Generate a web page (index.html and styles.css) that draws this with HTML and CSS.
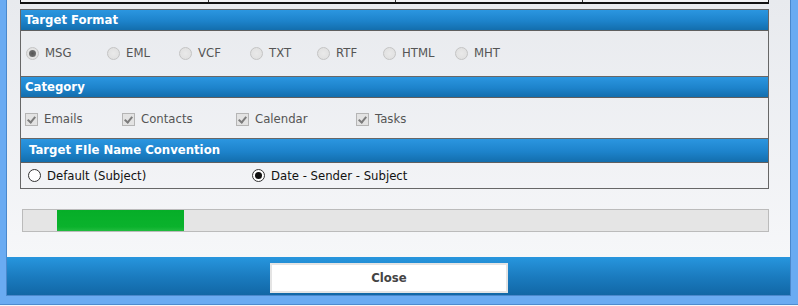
FILE: index.html
```html
<!DOCTYPE html>
<html lang="en">
<head>
    <meta charset="UTF-8">
    <title>Export</title>
    <link rel="stylesheet" href="styles.css">
</head>
<body>
    <div class="frame">
        <div class="dialog">
            <div class="content">
                <div class="top-table">
                    <div></div><div></div><div></div><div></div>
                </div>

                <div class="options">
                    <div class="opt-head">Target Format</div>
                    <div class="opt-body formats">
                        <label><input type="radio" name="fmt" checked disabled> MSG</label>
                        <label><input type="radio" name="fmt" disabled> EML</label>
                        <label><input type="radio" name="fmt" disabled> VCF</label>
                        <label><input type="radio" name="fmt" disabled> TXT</label>
                        <label><input type="radio" name="fmt" disabled> RTF</label>
                        <label><input type="radio" name="fmt" disabled> HTML</label>
                        <label><input type="radio" name="fmt" disabled> MHT</label>
                    </div>

                    <div class="opt-head">Category</div>
                    <div class="opt-body category">
                        <label><input type="checkbox" checked disabled> Emails</label>
                        <label><input type="checkbox" checked disabled> Contacts</label>
                        <label><input type="checkbox" checked disabled> Calendar</label>
                        <label><input type="checkbox" checked disabled> Tasks</label>
                    </div>

                    <div class="opt-head naming-head">Target FIle Name Convention</div>
                    <div class="opt-body naming">
                        <label><input type="radio" name="naming"> Default (Subject)</label>
                        <label><input type="radio" name="naming" checked> Date - Sender - Subject</label>
                    </div>
                </div>

                <div class="progress">
                    <div class="progress-fill"></div>
                </div>
            </div>

            <div class="footer">
                <button class="close-btn">Close</button>
            </div>
        </div>
    </div>
</body>
</html>
```

FILE: styles.css
```css
* {
    margin: 0;
    padding: 0;
    box-sizing: border-box;
}

body {
    width: 798px;
    height: 306px;
    background: #f7f8fa;
    font-family: "DejaVu Sans", Verdana, sans-serif;
    font-size: 11.7px;
    overflow: hidden;
}

.frame {
    height: 305px;
    background: #6aabf2;
    border-bottom: 1px solid #4d8bd0;
    padding: 0 7px 8px 6px;
}

.dialog {
    height: 100%;
    display: flex;
    flex-direction: column;
    border: 1px solid #4a88cc;
    border-top: none;
}

.content {
    flex: 1;
    background: linear-gradient(#e8eaee, #f6f7f9);
    padding-left: 13px;
}

/* the bottom of the list table above, cut off by the view */
.top-table {
    width: 749px;
    height: 4px;
    display: grid;
    grid-template-columns: 187px 187px 187px auto;
    background: #f1f2f4;
    border: 1px solid #111;
    border-top: none;
    border-bottom-width: 2px;
}

.top-table div + div {
    border-left: 1px solid #333;
}

.options {
    width: 749px;
    margin-top: 5px;
    border: 1px solid #676767;
}

.opt-head {
    height: 21px;
    line-height: 20px;
    padding-left: 4px;
    color: #fff;
    font-weight: bold;
    background: linear-gradient(#2b96e0, #1d83cb 55%, #136ead);
    border-bottom: 1px solid #5f5f5f;
}

.naming-head {
    height: 24px;
    line-height: 22px;
    padding-left: 8px;
}

.opt-body {
    display: grid;
    align-items: center;
    color: #555;
    border-bottom: 1px solid #676767;
}

.opt-body:last-child {
    border-bottom: none;
}

.opt-body label {
    display: flex;
    align-items: center;
    gap: 6px;
    white-space: nowrap;
}

.formats {
    height: 46px;
    padding: 0 0 1px 5px;
    grid-template-columns: 81px 72px 71px 67px 66px 72px auto;
}

.category {
    height: 41px;
    padding: 2px 0 0 4px;
    grid-template-columns: 97px 114px 120px auto;
}

.naming {
    height: 25px;
    padding: 0 0 0 7px;
    color: #111;
    grid-template-columns: 224px auto;
}

/* radios and checkboxes */
input[type="radio"],
input[type="checkbox"] {
    appearance: none;
    width: 13px;
    height: 13px;
    flex: none;
    position: relative;
}

input[type="radio"] {
    border-radius: 50%;
    border: 1px solid #333;
    background: #fff;
}

input[type="radio"]:checked::after {
    content: "";
    position: absolute;
    left: 2px;
    top: 2px;
    width: 7px;
    height: 7px;
    border-radius: 50%;
    background: #111;
}

input[type="radio"]:disabled {
    border-color: #c4c4c4;
    background: radial-gradient(#e9e9e9, #dedede);
}

input[type="radio"]:disabled:checked::after {
    background: radial-gradient(#555, #7a7a7a);
}

input[type="checkbox"] {
    border: 1px solid #b5b5b5;
    background: #e3e3e3;
}

input[type="checkbox"]:checked::after {
    content: "";
    position: absolute;
    left: 3px;
    top: 1px;
    width: 3px;
    height: 6px;
    border: solid #7c7c7c;
    border-width: 0 2px 2px 0;
    transform: rotate(40deg);
}

.progress {
    width: 747px;
    height: 23px;
    margin: 20px 0 0 2px;
    padding-left: 34px;
    background: #e5e5e5;
    border: 1px solid #bbb;
}

.progress-fill {
    width: 127px;
    height: 100%;
    background: linear-gradient(#06ae28, #0ab22c 80%, #21bb3f);
}

.footer {
    height: 38px;
    padding: 6px 0 0 263px;
    background: linear-gradient(#2796de, #1b7cc0 50%, #1167a6);
}

.close-btn {
    width: 238px;
    height: 30px;
    background: #fff;
    border: 2px solid #e4e4e4;
    font-family: "DejaVu Sans", Verdana, sans-serif;
    font-size: 11.7px;
    font-weight: bold;
    color: #444;
}
```
